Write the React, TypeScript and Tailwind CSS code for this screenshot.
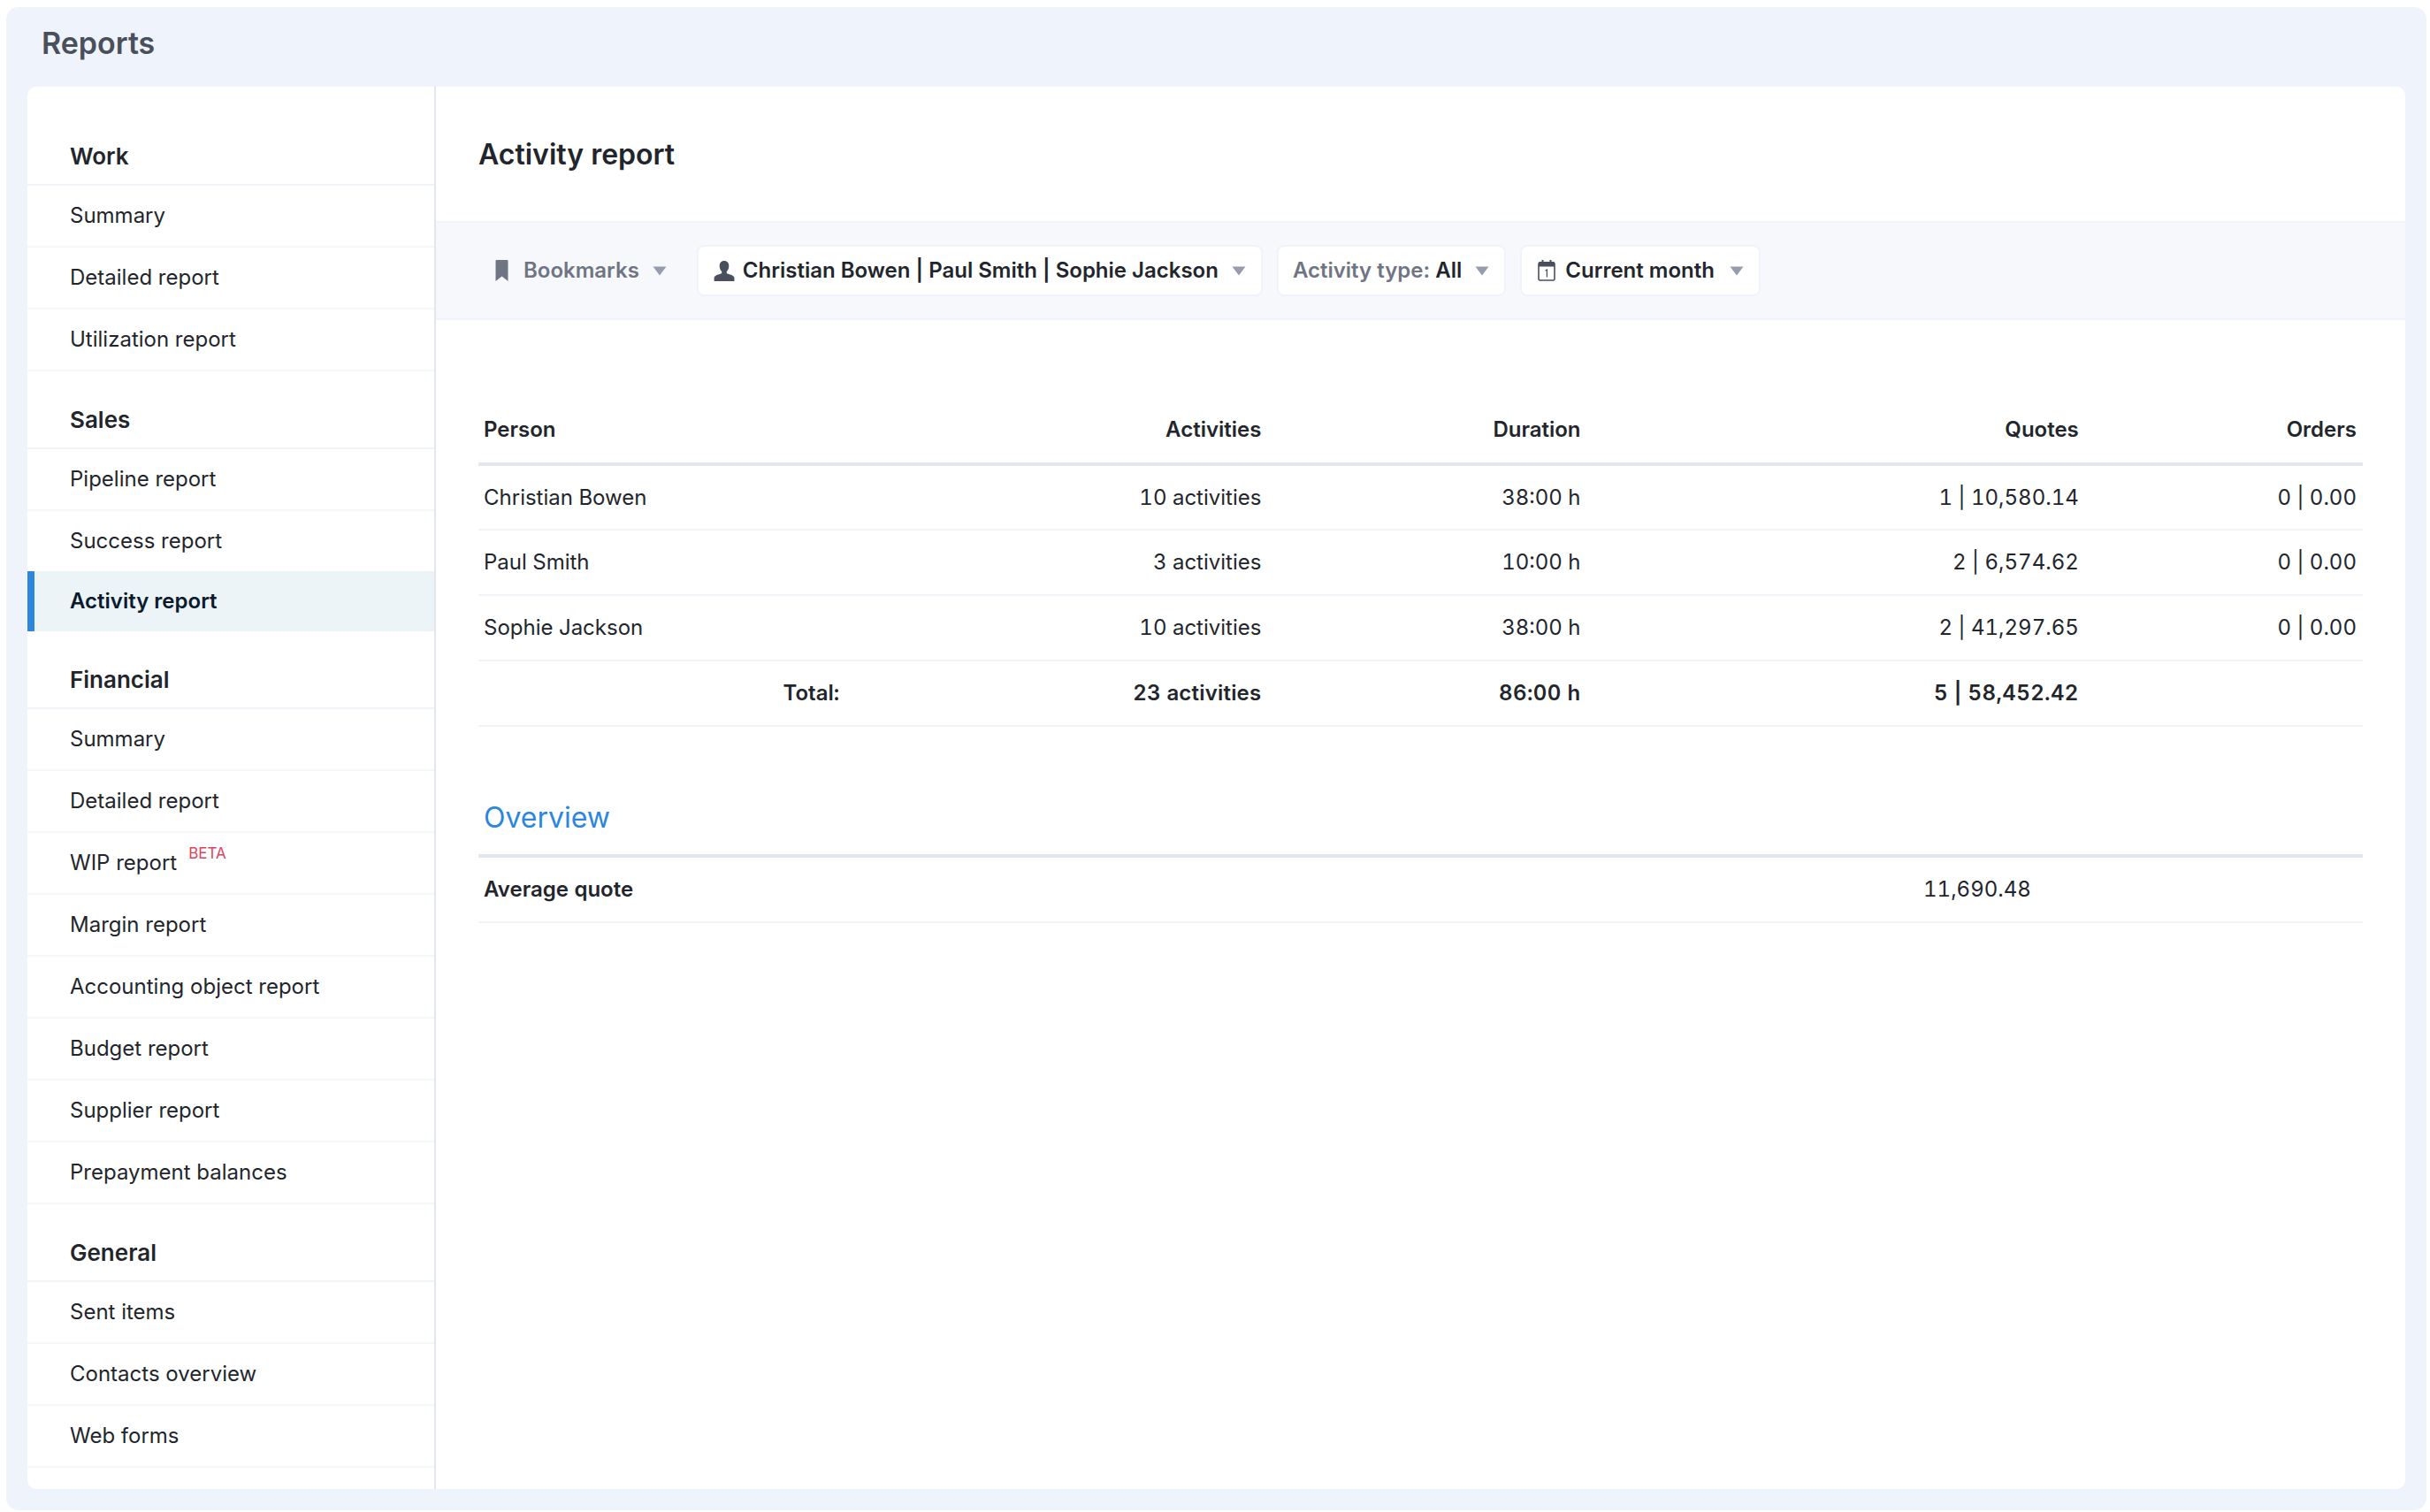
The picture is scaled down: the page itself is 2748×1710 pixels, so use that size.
import React from "react";

const Caret = () => (
  <svg width="16" height="11" viewBox="0 0 16 11" className="shrink-0">
    <path d="M0.5 0.5H15.5L8 10.5Z" fill="#969cab" />
  </svg>
);

const Bookmark = () => (
  <svg width="15" height="24" viewBox="0 0 15 24" className="shrink-0">
    <path d="M0.5 1.2C0.5 0.5 1 0 1.7 0H13.3C14 0 14.5 0.5 14.5 1.2V24L7.5 18.5L0.5 24Z" fill="#6f7583" />
  </svg>
);

const Person = () => (
  <svg width="24" height="23" viewBox="0 0 24 23" className="shrink-0">
    <path
      d="M12 0C8.6 0 6.7 2.4 6.7 5.8C6.7 8.4 7.6 10.6 9.2 12V14.2C6.8 15.2 1 15.9 0.6 19V23H23.4V19C23 15.9 17.2 15.2 14.8 14.2V12C16.4 10.6 17.3 8.4 17.3 5.8C17.3 2.4 15.4 0 12 0Z"
      fill="#4a4f5c"
    />
  </svg>
);

const Calendar = () => (
  <svg width="20" height="24" viewBox="0 0 20 24" className="shrink-0">
    <rect x="1" y="3" width="18" height="20" rx="1.5" fill="#fff" stroke="#4a4f5c" strokeWidth="1.6" />
    <path d="M1 3.5C1 2.7 1.7 2 2.5 2H17.5C18.3 2 19 2.7 19 3.5V7.5H1Z" fill="#4a4f5c" />
    <rect x="4.5" y="0" width="2" height="3.5" fill="#4a4f5c" />
    <rect x="13.5" y="0" width="2" height="3.5" fill="#4a4f5c" />
    <path d="M8.6 12.2L10.4 11V19.5" fill="none" stroke="#4a4f5c" strokeWidth="1.2" />
  </svg>
);

const Item = ({ label, beta }: { label: string; beta?: boolean }) => (
  <a className="flex h-[70px] items-center border-b-2 border-[#f5f6fa] pl-[48px] text-[24px] text-[#22262c]">
    {label}
    {beta && <sup className="relative -top-[11px] ml-[13px] text-[17px] leading-none text-[#d9465f]">BETA</sup>}
  </a>
);

const Head = ({ label }: { label: string }) => (
  <div className="flex h-[88px] items-end border-b-2 border-[#f1f3f8] pb-[13px] pl-[48px] text-[26px] leading-[36px] font-semibold text-[#22262c]">
    {label}
  </div>
);

const Section = ({ title, items }: { title: string; items: string[] }) => (
  <section>
    <Head label={title} />
    {items.map((i) =>
      i === "Activity report" ? (
        <a key={i} className="-mt-[2px] flex h-[68px] items-center border-l-8 border-[#2d87dd] bg-[#ecf4f8] pl-[40px] text-[24px] font-semibold text-[#0b1b2e]">
          {i}
        </a>
      ) : (
        <Item key={i} label={i} beta={i === "WIP report"} />
      ),
    )}
  </section>
);

const rows = [
  ["Christian Bowen", "10 activities", "38:00 h", "1 | 10,580.14", "0 | 0.00"],
  ["Paul Smith", "3 activities", "10:00 h", "2 | 6,574.62", "0 | 0.00"],
  ["Sophie Jackson", "10 activities", "38:00 h", "2 | 41,297.65", "0 | 0.00"],
];

export default function App() {
  return (
    <div className="h-[1710px] w-full bg-white pt-[8px] pr-[4px] pb-[2px] pl-[7px] [font-family:Inter,sans-serif]">
      <div className="flex h-full flex-col rounded-[14px] bg-[#eff3fb] px-[24px] pb-[24px]">
        <header className="flex h-[90px] shrink-0 items-center pb-[10px] pl-[16px] text-[34px] font-semibold text-[#4a4f5c]">Reports</header>
        <div className="flex min-h-0 flex-1 overflow-hidden rounded-[10px] bg-white">
          <aside className="w-[462px] shrink-0 border-r-2 border-[#e2e6ee] pt-[24px]">
            <Section title="Work" items={["Summary", "Detailed report", "Utilization report"]} />
            <Section title="Sales" items={["Pipeline report", "Success report", "Activity report"]} />
            <Section
              title="Financial"
              items={["Summary", "Detailed report", "WIP report", "Margin report", "Accounting object report", "Budget report", "Supplier report", "Prepayment balances"]}
            />
            <Section title="General" items={["Sent items", "Contacts overview", "Web forms"]} />
          </aside>
          <main className="min-w-0 flex-1">
            <div className="flex h-[152px] items-center pt-[1px] pl-[48px] text-[32px] font-semibold text-[#22262c]">Activity report</div>
            <div className="flex h-[112px] items-center border-y-2 border-[#eff3fb] bg-[#f7f8fc] pl-[67px] text-[24px] font-semibold">
              <button className="flex h-[58px] items-center text-[#6f7583]">
                <Bookmark />
                <span className="ml-[17px]">Bookmarks</span>
                <span className="ml-[15px]"><Caret /></span>
              </button>
              <button className="ml-[34px] flex h-[58px] items-center rounded-[8px] border-2 border-[#eff3fb] bg-white pr-[17px] pl-[17px] text-[#22262c]">
                <Person />
                <span className="ml-[9px]">Christian Bowen | Paul Smith | Sophie Jackson</span>
                <span className="ml-[15px]"><Caret /></span>
              </button>
              <button className="ml-[16px] flex h-[58px] items-center rounded-[8px] border-2 border-[#eff3fb] bg-white pr-[17px] pl-[16px] text-[#6f7583]">
                <span>Activity type: <span className="text-[#22262c]">All</span></span>
                <span className="ml-[15px]"><Caret /></span>
              </button>
              <button className="ml-[16px] flex h-[58px] items-center rounded-[8px] border-2 border-[#eff3fb] bg-white pr-[17px] pl-[18px] text-[#22262c]">
                <Calendar />
                <span className="ml-[11px]">Current month</span>
                <span className="ml-[17px]"><Caret /></span>
              </button>
            </div>
            <div className="px-[48px] pt-[87px] text-[24px] text-[#22262c] tabular-nums">
              <table className="w-full table-fixed border-collapse">
                <colgroup>
                  <col className="w-[414px]" />
                  <col className="w-[477px]" />
                  <col className="w-[361px]" />
                  <col className="w-[563px]" />
                  <col className="w-[315px]" />
                </colgroup>
                <thead>
                  <tr className="h-[76px] border-b-4 border-[#e2e6ee] font-semibold">
                    <th className="px-[6px] text-left font-semibold">Person</th>
                    <th className="px-[6px] text-right font-semibold">Activities</th>
                    <th className="px-[6px] text-right font-semibold">Duration</th>
                    <th className="px-[6px] text-right font-semibold">Quotes</th>
                    <th className="pr-[7px] pl-[6px] text-right font-semibold">Orders</th>
                  </tr>
                </thead>
                <tbody>
                  {rows.map((r) => (
                    <tr key={r[0]} className="h-[74px] border-b-2 border-[#f1f3f8]">
                      {r.map((c, i) => (
                        <td key={i} className={`pl-[6px] ${i === 0 ? "text-left" : "text-right"} ${i === 4 ? "pr-[7px]" : "pr-[6px]"}`}>{c}</td>
                      ))}
                    </tr>
                  ))}
                  <tr className="h-[74px] border-b-2 border-[#f1f3f8] font-semibold">
                    <td className="px-[6px] text-right">Total:</td>
                    <td className="px-[6px] text-right tracking-[0.2px]">23 activities</td>
                    <td className="px-[6px] text-right tracking-[0.4px]">86:00 h</td>
                    <td className="px-[6px] text-right tracking-[0.4px]">5 | 58,452.42</td>
                    <td />
                  </tr>
                </tbody>
              </table>
              <h2 className="flex h-[148px] items-end border-b-4 border-[#e2e6ee] pb-[18px] pl-[6px] text-[32px] leading-[46px] font-normal text-[#2b86de]">Overview</h2>
              <div className="flex h-[74px] items-center border-b-2 border-[#f1f3f8]">
                <span className="w-[1634px] pl-[6px] font-semibold">Average quote</span>
                <span>11,690.48</span>
              </div>
            </div>
          </main>
        </div>
      </div>
    </div>
  );
}
